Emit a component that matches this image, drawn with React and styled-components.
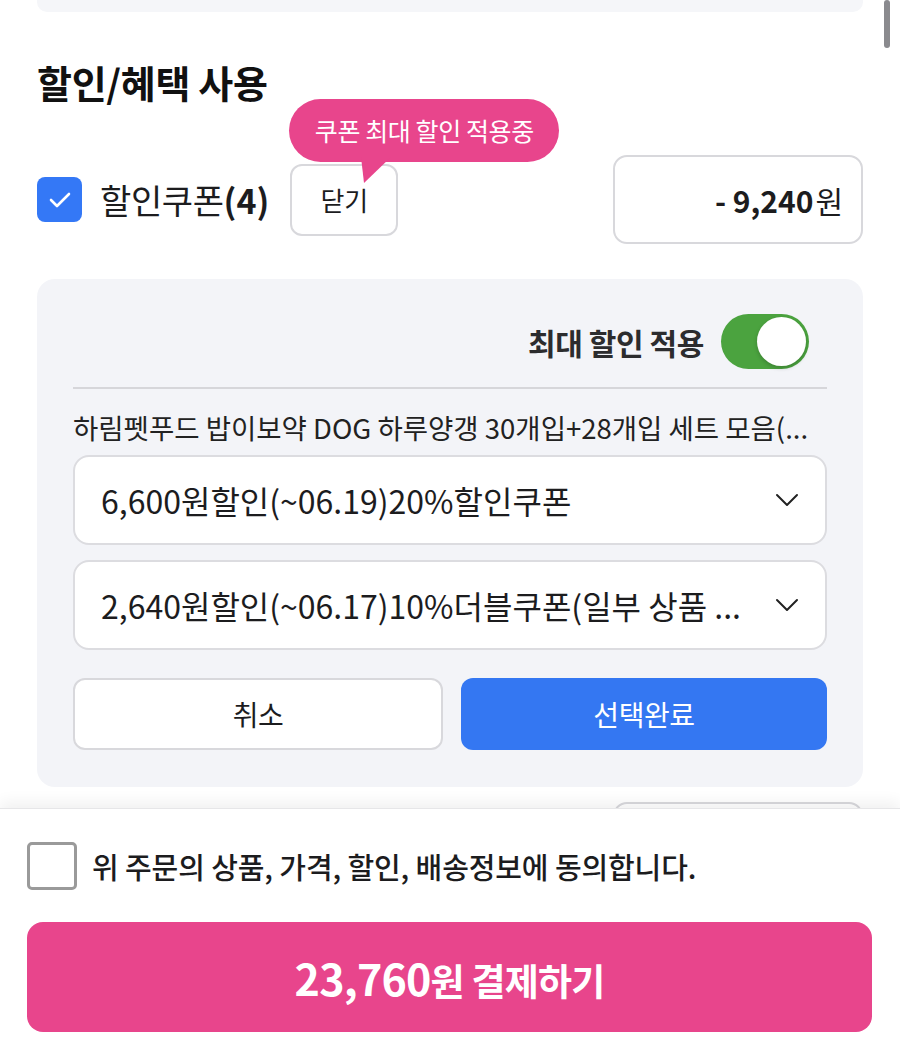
import React from 'react'
import styled, { createGlobalStyle } from 'styled-components'

const GlobalStyle = createGlobalStyle`
    html, body {
        margin: 0;
        padding: 0;
        background: #fff;
    }
    * {
        box-sizing: border-box;
    }
    body {
        font-family: "Noto Sans CJK KR", "Noto Sans", "Liberation Sans", sans-serif;
        color: #1c1c1e;
    }
`

const Page = styled.div`
    width: 900px;
    height: 1037px;
    display: flex;
    flex-direction: column;
    overflow: hidden;
    position: relative;
`
const Content = styled.div`
    flex: 1;
    overflow: hidden;
    padding: 0 37px;
`
const TopCard = styled.div`
    height: 12px;
    background: #f5f6f9;
    border-radius: 0 0 10px 10px;
`
const ScrollThumb = styled.div`
    position: absolute;
    top: 0;
    right: 10px;
    width: 6px;
    height: 48px;
    border-radius: 3px;
    background: #8a8a8e;
`
const SectionTitle = styled.h2`
    margin: 45px 0 0;
    font-size: 38px;
    font-weight: 700;
    line-height: 50px;
    letter-spacing: -0.3px;
    color: #111;
`
const CouponRow = styled.div`
    display: flex;
    align-items: center;
    margin-top: 48px;
`
const CheckBox = styled.div`
    width: 45px;
    height: 45px;
    border-radius: 8px;
    display: flex;
    align-items: center;
    justify-content: center;
    flex-shrink: 0;
    background: ${p => (p.$checked ? '#3478f6' : '#fff')};
    border: ${p => (p.$checked ? 'none' : '3px solid #9a9a9a')};
`
const CouponLabel = styled.span`
    margin-left: 18px;
    font-size: 34px;
    letter-spacing: -0.4px;
    color: #1c1c1e;

    b {
        font-weight: 700;
        letter-spacing: 0;
    }
`
const CloseWrap = styled.div`
    position: relative;
    margin-left: 21px;
`
const CloseButton = styled.button`
    width: 108px;
    height: 72px;
    border: 2px solid #d8d8dc;
    border-radius: 12px;
    background: #fff;
    font-family: inherit;
    font-size: 26px;
    color: #1c1c1e;
`
const Tooltip = styled.div`
    position: absolute;
    left: -1px;
    top: -65px;
    width: 270px;
    height: 63px;
    border-radius: 32px;
    background: #e8458c;
    color: #fff;
    font-size: 25px;
    letter-spacing: -0.4px;
    display: flex;
    align-items: center;
    justify-content: center;
    white-space: nowrap;

    svg {
        position: absolute;
        left: 72px;
        top: 58px;
    }
`
const AmountBox = styled.div`
    margin-left: auto;
    width: 250px;
    height: 89px;
    border: 2px solid #d8d8dc;
    border-radius: 14px;
    display: flex;
    align-items: center;
    justify-content: flex-end;
    padding-right: 18px;
    font-size: 30px;
    color: #1c1c1e;

    b {
        font-weight: 700;
        margin-right: 2px;
    }
`
const Panel = styled.div`
    margin-top: 35px;
    background: #f3f4f8;
    border-radius: 18px;
    padding: 35px 36px 37px;
`
const ToggleRow = styled.div`
    display: flex;
    align-items: center;
    justify-content: flex-end;
    gap: 17px;
    padding-right: 18px;
`
const ToggleLabel = styled.span`
    font-size: 30px;
    font-weight: 700;
    letter-spacing: -0.4px;
    color: #2c2c2e;
`
const Switch = styled.div`
    width: 88px;
    height: 55px;
    border-radius: 28px;
    background: ${p => (p.$on ? '#4ba33f' : '#d0d0d4')};
    padding: 3px;
    display: flex;
    justify-content: ${p => (p.$on ? 'flex-end' : 'flex-start')};
`
const Knob = styled.div`
    width: 49px;
    height: 49px;
    border-radius: 50%;
    background: #fff;
    box-shadow: 0 2px 4px rgba(0, 0, 0, 0.2);
`
const Divider = styled.div`
    height: 2px;
    background: #d6d6da;
    margin-top: 18px;
`
const ProductName = styled.div`
    margin-top: 19px;
    font-size: 27.5px;
    line-height: 38px;
    letter-spacing: 0;
    color: #222;
    white-space: nowrap;
`
const SelectList = styled.div`
    display: flex;
    flex-direction: column;
    gap: 15px;
    margin-top: 9px;
`
const Select = styled.div`
    height: 90px;
    background: #fff;
    border: 2px solid #dcdce0;
    border-radius: 16px;
    display: flex;
    align-items: center;
    padding: 0 26px 0 26px;
    gap: 10px;
`
const SelectText = styled.span`
    flex: 1;
    min-width: 0;
    font-size: 32px;
    letter-spacing: 0;
    color: #1c1c1e;
    white-space: nowrap;
`
const ButtonRow = styled.div`
    display: grid;
    grid-template-columns: 370px 1fr;
    gap: 18px;
    margin-top: 28px;
`
const ActionButton = styled.button`
    height: 72px;
    border-radius: 12px;
    font-family: inherit;
    font-size: 28px;
    letter-spacing: -0.4px;
    border: ${p => (p.$primary ? 'none' : '2px solid #d8d8dc')};
    background: ${p => (p.$primary ? '#3477f2' : '#fff')};
    color: ${p => (p.$primary ? '#fff' : '#1c1c1e')};
`
const PeekRow = styled.div`
    display: flex;
    justify-content: flex-end;
    margin-top: 15px;
`
const PeekBox = styled.div`
    width: 250px;
    height: 89px;
    border: 2px solid #d8d8dc;
    border-radius: 14px;
`
const BottomBar = styled.div`
    height: 229px;
    flex-shrink: 0;
    background: #fff;
    box-shadow: 0 -6px 14px rgba(0, 0, 0, 0.06);
    border-top: 1px solid #e6e6e8;
    padding: 33px 28px 0 27px;
    z-index: 1;
`
const AgreeRow = styled.div`
    display: flex;
    align-items: center;
    gap: 15px;
`
const AgreeBox = styled.div`
    width: 50px;
    height: 48px;
    border: 3px solid #9a9a9a;
    border-radius: 5px;
    background: #fff;
`
const AgreeText = styled.span`
    font-size: 29px;
    font-weight: 500;
    letter-spacing: -0.1px;
    color: #1c1c1e;
`
const PayButton = styled.button`
    margin-top: 32px;
    width: 100%;
    height: 110px;
    border: none;
    border-radius: 16px;
    background: #e8458c;
    color: #fff;
    font-family: inherit;
    font-size: 37px;
    font-weight: 700;
    letter-spacing: -0.8px;

    b {
        font-size: 43px;
        font-weight: 700;
    }
`

const Check = () => (
    <svg width="22" height="16" viewBox="0 0 22 16">
        <polyline points="2,8 8,14 20,2" fill="none" stroke="#fff" strokeWidth="2.6" strokeLinecap="round" strokeLinejoin="round" />
    </svg>
)

const Chevron = () => (
    <svg width="24" height="14" viewBox="0 0 24 14">
        <polyline points="2,2 12,12 22,2" fill="none" stroke="#222" strokeWidth="2" strokeLinecap="round" strokeLinejoin="round" />
    </svg>
)

const coupons = [
    '6,600원할인(~06.19)20%할인쿠폰',
    '2,640원할인(~06.17)10%더블쿠폰(일부 상품 ...',
]

const App = () => {
    return (
        <Page>
            <GlobalStyle />
            <ScrollThumb />
            <Content>
                <TopCard />
                <SectionTitle>할인/혜택 사용</SectionTitle>
                <CouponRow>
                    <CheckBox $checked>
                        <Check />
                    </CheckBox>
                    <CouponLabel>할인쿠폰<b>(4)</b></CouponLabel>
                    <CloseWrap>
                        <Tooltip>
                            쿠폰 최대 할인 적용중
                            <svg width="30" height="28" viewBox="0 0 30 28">
                                <path d="M0 0 L30 0 L3 26 Z" fill="#e8458c" />
                            </svg>
                        </Tooltip>
                        <CloseButton>닫기</CloseButton>
                    </CloseWrap>
                    <AmountBox>
                        <b>- 9,240</b>원
                    </AmountBox>
                </CouponRow>
                <Panel>
                    <ToggleRow>
                        <ToggleLabel>최대 할인 적용</ToggleLabel>
                        <Switch $on>
                            <Knob />
                        </Switch>
                    </ToggleRow>
                    <Divider />
                    <ProductName>하림펫푸드 밥이보약 DOG 하루양갱 30개입+28개입 세트 모음(...</ProductName>
                    <SelectList>
                        {coupons.map(c => (
                            <Select key={c}>
                                <SelectText>{c}</SelectText>
                                <Chevron />
                            </Select>
                        ))}
                    </SelectList>
                    <ButtonRow>
                        <ActionButton>취소</ActionButton>
                        <ActionButton $primary>선택완료</ActionButton>
                    </ButtonRow>
                </Panel>
                <PeekRow>
                    <PeekBox />
                </PeekRow>
            </Content>
            <BottomBar>
                <AgreeRow>
                    <AgreeBox />
                    <AgreeText>위 주문의 상품, 가격, 할인, 배송정보에 동의합니다.</AgreeText>
                </AgreeRow>
                <PayButton>
                    <b>23,760</b>원 결제하기
                </PayButton>
            </BottomBar>
        </Page>
    )
}

export default App
